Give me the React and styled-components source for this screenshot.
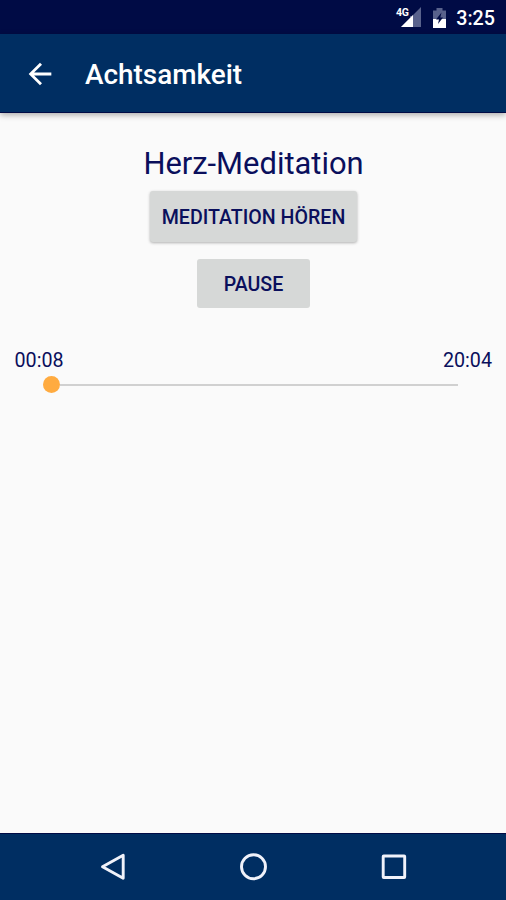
import React, { useState } from "react";
import styled, { createGlobalStyle } from "styled-components";

const colors = {
  statusBar: "#000b45",
  principal: "#002e62",
  text: "#0a0f5c",
  button: "#d6d8d7",
  accent: "#ffab40",
  track: "#d0d0d0",
  background: "#fafafa",
};

const GlobalStyle = createGlobalStyle`
  * {
    box-sizing: border-box;
  }
  body {
    margin: 0;
    background: ${colors.background};
    font-family: Roboto, sans-serif;
  }
`;

const Screen = styled.div`
  display: flex;
  flex-direction: column;
  width: 506px;
  height: 900px;
  overflow: hidden;
  background: ${colors.background};
  color: ${colors.text};
`;

const StatusBar = styled.div`
  display: flex;
  justify-content: flex-end;
  align-items: center;
  flex: none;
  height: 34px;
  padding: 3px 11px 0 0;
  background: ${colors.statusBar};
  color: #fff;
`;
const SignalIcon = styled.svg`
  width: 28px;
  height: 22px;
  margin: -3px 9px 0 0;
`;
const BatteryIcon = styled.svg`
  width: 15px;
  height: 20px;
  margin: -1px 9px 0 0;
`;
const Clock = styled.span`
  font-size: 19.7px;
  font-weight: 500;
  line-height: 22px;
`;

const AppBar = styled.header`
  display: flex;
  align-items: center;
  flex: none;
  height: 79px;
  padding: 2px 0 0 23px;
  background: ${colors.principal};
  border-bottom: 1px solid ${colors.statusBar};
  color: #fff;
  box-shadow: 0 2px 6px rgba(0, 0, 0, 0.32);
`;
const BackButton = styled.button`
  display: flex;
  width: 34px;
  height: 34px;
  padding: 0;
  border: none;
  background: none;
  color: inherit;
`;
const Title = styled.h1`
  margin: 2px 0 0 28px;
  font-size: 27.9px;
  font-weight: 500;
  line-height: 34px;
`;

const Content = styled.main`
  display: flex;
  flex-direction: column;
  align-items: center;
  flex: 1;
  padding-top: 33px;
`;
const Heading = styled.h2`
  margin: 0;
  padding-left: 1px;
  font-size: 30.9px;
  font-weight: 400;
  line-height: 36px;
`;
const ActionButton = styled.button`
  width: ${(props) => props.$width}px;
  height: ${(props) => props.$height}px;
  margin: ${(props) => props.$top}px 0 0;
  padding: 2px 0 0 1px;
  border: none;
  border-radius: 3px;
  background: ${colors.button};
  box-shadow: ${(props) =>
    props.$raised ? "0 1px 3px rgba(0, 0, 0, 0.3)" : "none"};
  color: ${colors.text};
  font-family: inherit;
  font-size: 19.6px;
  font-weight: 500;
  text-transform: uppercase;
`;

const Times = styled.div`
  display: flex;
  justify-content: space-between;
  width: 100%;
  margin-top: 41px;
  padding: 0 14px 0 14.5px;
  font-size: 19.7px;
  line-height: 24px;
`;
const Slider = styled.div`
  display: flex;
  align-items: center;
  align-self: flex-start;
  width: 415px;
  height: 17px;
  margin: 3px 0 0 43px;
`;
const Thumb = styled.div`
  flex: none;
  width: 17px;
  height: 17px;
  border-radius: 50%;
  background: ${colors.accent};
`;
const Track = styled.div`
  flex: 1;
  height: 2px;
  background: ${colors.track};
`;

const NavBar = styled.nav`
  display: flex;
  justify-content: center;
  align-items: center;
  gap: 108px;
  flex: none;
  height: 67px;
  background: ${colors.principal};
  border-top: 1px solid ${colors.statusBar};
`;
const NavIcon = styled.svg`
  width: 32px;
  height: 32px;
  fill: none;
  stroke: #f0f2fa;
  stroke-width: 2.9;
  stroke-linejoin: round;
`;
const SignalLabel = styled.text`
  font-family: Roboto, sans-serif;
  font-size: 10.5px;
  font-weight: 700;
`;

export default function App() {
  const [playing, setPlaying] = useState(true);

  return (
    <>
      <GlobalStyle />
      <Screen>
        <StatusBar>
          <SignalIcon viewBox='0 0 28 22'>
            <path d='M26 1V21H6L15 12V10H17Z' fill='#59628c' />
            <path d='M18 9V21H6Z' fill='#fff' />
            <SignalLabel x='1' y='9.5' fill='#fff' textLength='13'>
              4G
            </SignalLabel>
          </SignalIcon>
          <BatteryIcon viewBox='0 0 15 20'>
            <path d='M1 2.5H4.5V0H10.5V2.5H14V11H1Z' fill='#59628c' />
            <path d='M1 11H14V20H1Z' fill='#fff' />
            <path d='M9.5 4.5L4 11.5H7L6 16L11 9.5H8.3Z' fill={colors.statusBar} />
          </BatteryIcon>
          <Clock>3:25</Clock>
        </StatusBar>
        <AppBar>
          <BackButton aria-label='Zurück'>
            <svg width='34' height='34' viewBox='0 0 24 24' fill='#fff'>
              <path d='M20 11H7.83l5.59-5.59L12 4l-8 8 8 8 1.41-1.41L7.83 13H20v-2z' />
            </svg>
          </BackButton>
          <Title>Achtsamkeit</Title>
        </AppBar>
        <Content>
          <Heading>Herz-Meditation</Heading>
          <ActionButton
            $width={207}
            $height={51}
            $top={9}
            $raised
            onClick={() => setPlaying(true)}
          >
            Meditation hören
          </ActionButton>
          <ActionButton
            $width={113}
            $height={49}
            $top={17}
            onClick={() => setPlaying(!playing)}
          >
            Pause
          </ActionButton>
          <Times>
            <span>00:08</span>
            <span>20:04</span>
          </Times>
          <Slider>
            <Thumb />
            <Track />
          </Slider>
        </Content>
        <NavBar>
          <NavIcon viewBox='0 0 32 32'>
            <path d='M26.2 4.2V27.2L5.5 15.7Z' />
          </NavIcon>
          <NavIcon viewBox='0 0 32 32'>
            <circle cx='16.5' cy='15.7' r='12' />
          </NavIcon>
          <NavIcon viewBox='0 0 32 32'>
            <rect x='6.2' y='5' width='21.5' height='21.5' rx='0.5' />
          </NavIcon>
        </NavBar>
      </Screen>
    </>
  );
}
